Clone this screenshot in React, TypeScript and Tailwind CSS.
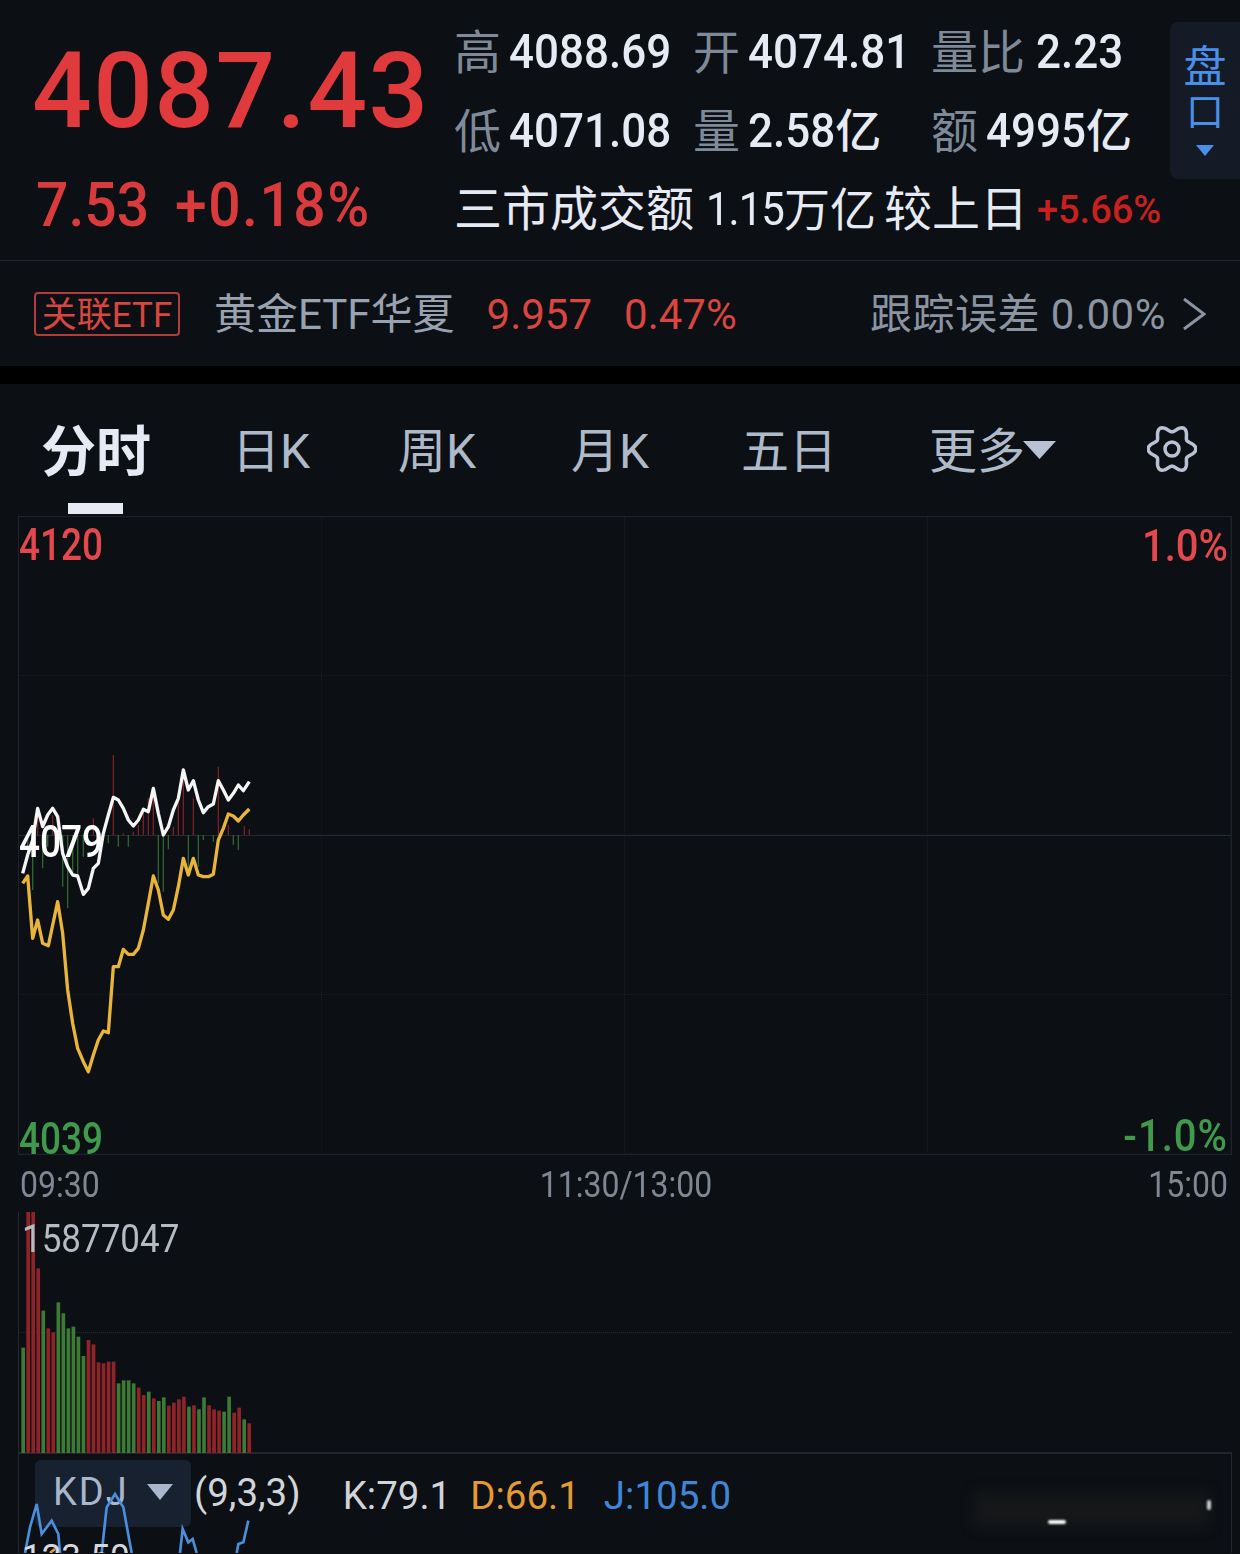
const font = "font-['Roboto','Noto_Sans_CJK_SC',sans-serif]";

const whiteLine =
  "68,400 83,345 98,300 113,205 128,260 143,225 158,205 173,230 188,340 203,380 218,405 233,408 250,463 265,445 280,385 295,370 310,280 325,225 340,172 355,180 370,205 385,240 400,258 415,240 430,208 445,215 460,145 475,220 490,285 505,260 520,210 535,175 550,90 565,150 580,122 595,180 610,218 625,200 640,192 655,122 670,150 685,180 700,160 715,135 730,152 748,125";
const yellowLine =
  "68,430 83,408 98,595 113,540 128,610 145,617 173,485 188,580 203,750 218,850 233,925 250,965 265,995 280,945 295,900 310,873 325,878 340,680 355,680 370,628 385,643 400,643 415,625 430,570 445,490 460,408 475,450 490,525 505,538 520,510 535,440 550,355 565,405 580,355 595,405 610,410 625,410 640,403 655,300 670,265 685,222 700,228 715,243 730,225 748,207";

const priceBars: [number, number, string][] = [
  [83, 350, "g"], [98, 450, "g"], [113, 205, "r"], [128, 385, "g"], [143, 320, "g"], [158, 225, "r"],
  [188, 440, "g"], [203, 505, "g"], [218, 400, "g"], [233, 405, "g"], [250, 350, "g"], [280, 235, "r"],
  [325, 310, "g"], [340, 45, "r"], [355, 320, "g"], [370, 280, "r"], [385, 320, "g"], [400, 275, "r"],
  [415, 255, "r"], [430, 215, "r"], [445, 175, "r"], [460, 150, "r"], [475, 430, "g"], [490, 455, "g"],
  [505, 328, "g"], [520, 260, "r"], [535, 180, "r"], [550, 100, "r"], [565, 400, "g"], [580, 175, "r"],
  [595, 380, "g"], [610, 300, "g"], [640, 305, "g"], [655, 80, "r"], [685, 255, "r"], [700, 315, "g"],
  [715, 330, "g"], [733, 258, "r"], [748, 268, "r"],
];

const volumeBars: [number, string][] = [
  [443, "g"], [35, "r"], [35, "r"], [205, "r"], [332, "g"], [385, "r"], [397, "r"], [307, "g"], [340, "g"],
  [385, "g"], [380, "g"], [410, "g"], [468, "g"], [420, "r"], [433, "r"], [487, "r"], [490, "r"], [485, "r"],
  [485, "r"], [550, "g"], [541, "g"], [541, "g"], [550, "g"], [563, "r"], [585, "r"], [575, "g"], [595, "r"],
  [603, "g"], [592, "g"], [617, "r"], [608, "r"], [598, "r"], [590, "r"], [620, "g"], [616, "r"], [628, "g"],
  [592, "g"], [616, "r"], [628, "r"], [632, "r"], [635, "g"], [590, "g"], [638, "r"], [623, "r"], [658, "g"],
  [670, "r"],
];

// six soft teeth, pointing left/right and at the 60 degree marks
const gearPath =
  Array.from({ length: 72 }, (_, i) => {
    const a = (i * 5 * Math.PI) / 180;
    const r = 20.5 + 3.4 * Math.cos(6 * a);
    return `${i === 0 ? "M" : "L"}${(25 + r * Math.cos(a)).toFixed(2)} ${(25 + r * Math.sin(a)).toFixed(2)}`;
  }).join("") + "Z";

const Quote = ({
  label,
  value,
  unit,
  className,
  gap = "mr-[8px]",
}: {
  label: string;
  value: string;
  unit?: string;
  className: string;
  gap?: string;
}) => (
  <div className={`flex items-center ${className}`}>
    <span className={`text-[#7e8a99] text-[47px] leading-none ${gap}`}>{label}</span>
    <span className="inline-block scale-y-[1.08] text-[#e6eaf5] text-[44px] leading-none font-medium">{value}</span>
    {unit && <span className="text-[#e6eaf5] text-[46px] leading-none font-medium">{unit}</span>}
  </div>
);

const Tab = ({ label, className }: { label: string; className: string }) => (
  <span className={`text-[#aebaca] text-[48px] leading-none ${className}`}>{label}</span>
);

const DottedGrid = () => (
  <div className="absolute inset-0 grid grid-cols-4 grid-rows-4">
    {Array.from({ length: 16 }).map((_, i) => (
      <div key={i} className="border-r border-b border-dotted border-[#171b22]" />
    ))}
  </div>
);

export default function App() {
  return (
    <div className={`w-[1240px] h-[1554px] overflow-hidden bg-[#0c0f14] ${font}`}>
      {/* quote header */}
      <div className="h-[261px] flex border-b border-[#20242b]">
        <div className="w-[454px] pl-[32px] pt-[31px] shrink-0">
          <div className="text-[#e03a3c] text-[105px] leading-[122px] font-medium tracking-[1.5px]">4087.43</div>
          <div className="flex text-[#d93b3d] text-[57px] leading-none font-medium mt-[23px] pl-[4px]">
            <span className="inline-block scale-y-[1.08] mr-[26px]">7.53</span>
            <span className="inline-block scale-y-[1.08] tracking-[1.5px]">+0.18%</span>
          </div>
        </div>
        <div className="w-[716px] shrink-0 pt-[26px]">
          <div className="flex h-[52px] items-center">
            <Quote label="高" value="4088.69" className="w-[239px]" />
            <Quote label="开" value="4074.81" className="w-[238px]" />
            <Quote label="量比" value="2.23" gap="mr-[11px]" className="" />
          </div>
          <div className="flex h-[52px] items-center mt-[27px]">
            <Quote label="低" value="4071.08" className="w-[239px]" />
            <Quote label="量" value="2.58" unit="亿" className="w-[238px]" />
            <Quote label="额" value="4995" unit="亿" className="" />
          </div>
          <div className="flex items-center h-[52px] mt-[27px] text-[#e6eaf5] text-[48px] leading-none whitespace-nowrap">
            <span>三市成交额</span>
            <span className="inline-block scale-y-[1.08] ml-[12px] text-[42px] tracking-[-1px]">1.15</span>
            <span className="text-[46px]">万亿</span>
            <span className="ml-[8px]">较上日</span>
            <span className="text-[#c8201f] text-[38px] font-medium ml-[9px]">+5.66%</span>
          </div>
        </div>
        <div className="mt-[22px] ml-auto w-[70px] h-[157px] rounded-l-[8px] bg-[#141b26] flex flex-col items-center text-[#4a8fe8] text-[43px] leading-[45px] pt-[23px]">
          <span>盘</span>
          <span className="text-[38px]">口</span>
          <svg width="18" height="11" viewBox="0 0 18 11" className="mt-[10px]">
            <path d="M0 0H18L9 11Z" fill="#4a8fe8" />
          </svg>
        </div>
      </div>

      {/* related ETF row */}
      <div className="h-[105px] flex items-center pl-[34px] pr-[34px]">
        <span className="w-[146px] h-[44px] pt-[3px] border-2 border-[#b03c3c] rounded-[4px] text-[#d9453f] text-[35px] leading-none flex items-center justify-center whitespace-nowrap">
          关联ETF
        </span>
        <span className="text-[#98a2b0] text-[42px] leading-none ml-[34px] mt-[3px]">黄金ETF华夏</span>
        <span className="text-[#d9453f] text-[42px] leading-none ml-[32px] mt-[3px]">9.957</span>
        <span className="text-[#d9453f] text-[42px] leading-none ml-[32px] mt-[3px]">0.47%</span>
        <span className="text-[#8a94a2] text-[42px] leading-none ml-auto mt-[3px] tracking-[0.5px]">跟踪误差 0.00%</span>
        <svg width="24" height="36" viewBox="0 0 24 36" className="ml-[16px]" fill="none" stroke="#8a94a2" strokeWidth="3">
          <path d="M2 3L22 18L2 33" />
        </svg>
      </div>

      <div className="h-[18px] bg-black" />

      {/* period tabs */}
      <div className="h-[132px] relative flex items-center pl-[41px] pt-[4px]">
        <span className="text-[#e6eaf5] text-[55px] leading-none font-bold w-[191px]">分时</span>
        <Tab label="日K" className="w-[166px]" />
        <Tab label="周K" className="w-[173px]" />
        <Tab label="月K" className="w-[170px]" />
        <Tab label="五日" className="w-[188px]" />
        <Tab label="更多" className="" />
        <svg width="33" height="18" viewBox="0 0 33 18" className="ml-[-2px] -mt-[5px]">
          <path d="M0 0H33L16.5 18Z" fill="#b8c2d4" />
        </svg>
        <svg width="50" height="50" viewBox="0 0 50 50" fill="none" stroke="#b8c2d4" strokeWidth="3.5" strokeLinejoin="round" className="absolute left-[1147px] top-[40px]">
          <path d={gearPath} />
          <circle cx="25" cy="25" r="7" />
        </svg>
        <div className="absolute left-[68px] bottom-[2px] w-[55px] h-[11px] bg-[#e6eaf5]" />
      </div>

      {/* price chart */}
      <div className="relative ml-[18px] w-[1214px] h-[639px] border border-[#1e2229]">
        <DottedGrid />
        <div className="absolute left-0 right-0 top-[318px] border-t border-[#262a31]" />
        <svg width="270" height="340" viewBox="0 0 810 1020" fill="none" className="absolute left-[-19px] top-[223px]">
          {priceBars.map(([x, y, c]) => (
            <line key={x} x1={x} x2={x} y1={285} y2={y} strokeWidth="4" stroke={c === "r" ? "#7a1f24" : "#2f6430"} />
          ))}
          <polyline points={yellowLine} stroke="#e8b53a" strokeWidth="10" strokeLinejoin="round" />
          <polyline points={whiteLine} stroke="#f5f5f5" strokeWidth="10" strokeLinejoin="round" />
        </svg>
        <span className="absolute left-[0px] top-[10px] inline-block scale-y-[1.2] text-[#e2484c] text-[37px] leading-none font-medium">4120</span>
        <span className="absolute right-[3px] top-[10px] inline-block scale-y-[1.1] text-[#e2484c] text-[40px] leading-none font-medium">1.0%</span>
        <span className="absolute left-[0px] top-[307px] inline-block scale-y-[1.2] text-white text-[37px] leading-none font-medium">4079</span>
        <span className="absolute left-[0px] bottom-[-3px] inline-block scale-y-[1.2] text-[#3f9a4c] text-[37px] leading-none font-medium">4039</span>
        <span className="absolute right-[3px] bottom-[-3px] inline-block scale-y-[1.1] text-[#3f9a4c] text-[40px] leading-none font-medium tracking-[1px]">-1.0%</span>
      </div>

      {/* time axis */}
      <div className="h-[57px] ml-[20px] mr-[12px] flex items-center justify-between text-[#7e8793] text-[32px] leading-none">
        <span className="inline-block scale-y-[1.15]">09:30</span>
        <span className="inline-block scale-y-[1.15] ml-[4px]">11:30/13:00</span>
        <span className="inline-block scale-y-[1.15]">15:00</span>
      </div>

      {/* volume chart */}
      <div className="relative ml-[18px] w-[1214px] h-[241px] border-b border-l border-[#22262d]">
        <div className="absolute left-0 right-0 top-[120px] border-t border-dotted border-[#22262d]" />
        <svg width="270" height="241" viewBox="0 0 810 723" className="absolute left-[-19px] top-0">
          {volumeBars.map(([y, c], i) => (
            <rect key={i} x={64 + i * 15.07} y={y - 36} width="11" height={762 - y} fill={c === "r" ? "#8f2428" : "#3d7a35"} />
          ))}
        </svg>
        <span className="absolute left-[3px] top-[10px] inline-block scale-y-[1.12] text-[#b5bbc4] text-[35px] leading-none">15877047</span>
      </div>

      {/* KDJ row */}
      <div className="relative ml-[18px] w-[1214px] h-[100px] border-l border-r border-t border-[#22262d] overflow-hidden">
        <div className="relative flex items-start h-[80px] pt-[6px]">
          <div className="ml-[16px] w-[156px] h-[67px] rounded-[6px] bg-[#182130] flex items-center pl-[18px] pb-[3px] text-[#a9b7cc] text-[38px] leading-none">
            <span className="tracking-[2px]">KDJ</span>
            <svg width="26" height="16" viewBox="0 0 26 16" className="ml-[18px]">
              <path d="M0 0H26L13 16Z" fill="#a9b7cc" />
            </svg>
          </div>
          <span className="ml-[3px] mt-[14px] text-[#d0d5dc] text-[38.5px] leading-none">(9,3,3)</span>
          <span className="ml-[42px] mt-[17px] text-[#d0d5dc] text-[38.5px] leading-none">K:79.1</span>
          <span className="ml-[19px] mt-[17px] text-[#e49a34] text-[38.5px] leading-none">D:66.1</span>
          <span className="ml-[24px] mt-[17px] text-[#3f86d8] text-[38.5px] leading-none">J:105.0</span>
        </div>
        <svg width="300" height="99" viewBox="0 0 900 297" fill="none" stroke="#4a8fdc" strokeWidth="8" className="absolute left-[-19px] top-0">
          <polyline points="75,297 90,220 110,150 125,240 155,200 175,240 180,297" />
          <polyline points="305,297 320,160 345,120 370,160 395,297" />
          <polyline points="540,297 548,225 565,265 578,255 590,297" />
          <polyline points="710,297 715,270 730,265 745,200" />
          <polyline points="150,297 165,285" stroke="#e49a34" />
        </svg>
        <span className="absolute left-[3px] top-[86px] text-[#d5d9df] text-[35px] leading-none">123.50</span>
        <div className="absolute left-[955px] top-[38px] w-[235px] h-[36px] bg-[#151719] blur-[6px]" />
        <div className="absolute left-[1029px] top-[66px] w-[18px] h-[4px] rounded-full bg-white blur-[1px]" />
        <div className="absolute left-[1188px] top-[46px] w-[4px] h-[10px] rounded-full bg-white/80 blur-[1px]" />
      </div>
    </div>
  );
}
